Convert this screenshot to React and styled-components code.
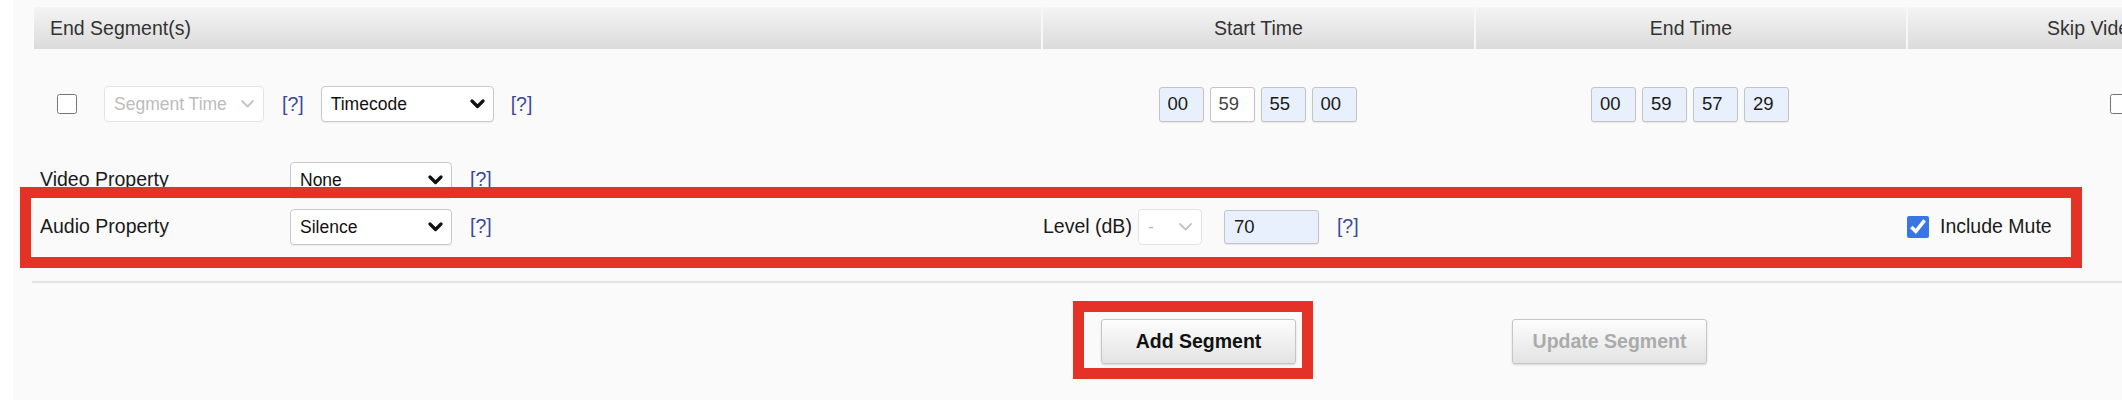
import React from "react";
import styled, { createGlobalStyle } from "styled-components";

const GlobalStyle = createGlobalStyle`
  html, body {
    margin: 0;
    padding: 0;
    background: #ffffff;
    overflow: hidden;
  }
  * {
    box-sizing: border-box;
  }
`;

const FONT = `"Liberation Sans", Arial, sans-serif`;

const Page = styled.div`
  position: relative;
  min-height: 400px;
  padding-left: 13px;
  font-family: ${FONT};
  font-size: 19.5px;
  color: #1a1a1a;
`;

const Panel = styled.div`
  min-height: 400px;
  background: #fafafa;
  padding: 7px 0 0 21px;
  width: 2400px;
`;

const Table = styled.div`
  display: grid;
  grid-template-columns: 1007px 433px 432px 373px;
`;

const HeadRow = styled.div`
  display: contents;
`;

const HeadCell = styled.div`
  height: 42px;
  display: flex;
  align-items: center;
  justify-content: ${(p) => (p.$left ? "flex-start" : "center")};
  padding-left: ${(p) => (p.$left ? "16px" : "0")};
  background: linear-gradient(#f4f4f4, #dbdbdb);
  border-left: ${(p) => (p.$left ? "none" : "2px solid #f7f7f7")};
  color: #333;
  white-space: nowrap;
`;

const Row = styled.div`
  display: contents;
`;

const Cell = styled.div`
  height: ${(p) => p.$h}px;
  padding-top: ${(p) => p.$pt || 0}px;
  padding-left: ${(p) => p.$pl || 0}px;
  display: flex;
  align-items: center;
  justify-content: ${(p) => (p.$center ? "center" : "flex-start")};
  gap: ${(p) => p.$gap || 0}px;
`;

const Check = styled.input.attrs({ type: "checkbox" })`
  width: ${(p) => p.$size || 20}px;
  height: ${(p) => p.$size || 20}px;
  margin: 0;
  accent-color: #3a76e2;
  flex: none;
`;

const SelectWrap = styled.span`
  position: relative;
  display: inline-flex;
  flex: none;
  width: ${(p) => p.$w}px;
  height: 36px;
  margin-left: ${(p) => p.$ml || 0}px;
`;

const NativeSelect = styled.select`
  appearance: none;
  width: 100%;
  height: 100%;
  margin: 0;
  padding: 0 26px 0 9px;
  border: 1px solid #c9c9c9;
  border-radius: 4px;
  background: #ffffff;
  box-shadow: 0 1px 1px rgba(0, 0, 0, 0.06);
  font-family: ${FONT};
  font-size: 17.5px;
  color: #111;
  &:disabled {
    opacity: 1;
    color: #bcbcbc;
    border-color: #e4e4e4;
    box-shadow: none;
  }
`;

const Chevron = styled.svg`
  position: absolute;
  right: 9px;
  top: 50%;
  transform: translateY(-50%);
  pointer-events: none;
`;

const Help = styled.span`
  color: #3c4a9c;
  margin-left: ${(p) => p.$ml || 0}px;
  flex: none;
`;

const TimeField = styled.input`
  width: 45px;
  height: 35px;
  margin: 0;
  padding: 0 0 0 8px;
  border: 1px solid #c4c4c4;
  border-radius: 3px;
  background: ${(p) => (p.$plain ? "#ffffff" : "#e8f0fe")};
  box-shadow: 0 1px 1px rgba(0, 0, 0, 0.08);
  font-family: ${FONT};
  font-size: 18.5px;
  color: ${(p) => (p.$plain ? "#444" : "#1a1a1a")};
  flex: none;
`;

const LevelField = styled(TimeField)`
  width: 95px;
  height: 34px;
  margin-left: 22px;
  padding-left: 9px;
`;

const PropLabel = styled.span`
  width: 250px;
  flex: none;
`;

const LevelLabel = styled.span`
  margin-right: 6px;
`;

const MuteLabel = styled.label`
  display: flex;
  align-items: center;
  gap: 11px;
  padding-left: 1px;
`;

const Divider = styled.div`
  height: 2px;
  margin: 31px 0 0 -2px;
  background: #e4e4e4;
`;

const Actions = styled.div`
  display: flex;
  gap: 216px;
  padding: 36px 0 0 1067px;
`;

const Button = styled.button`
  width: 195px;
  height: 45px;
  border: 1px solid #c6c6c6;
  border-radius: 3px;
  background: linear-gradient(#fdfdfd, #e3e3e3);
  box-shadow: 0 1px 2px rgba(0, 0, 0, 0.15);
  font-family: ${FONT};
  font-size: 19.5px;
  font-weight: bold;
  color: #111;
  &:disabled {
    color: #ababab;
  }
`;

const Highlight = styled.div`
  position: absolute;
  left: ${(p) => p.$x}px;
  top: ${(p) => p.$y}px;
  width: ${(p) => p.$w}px;
  height: ${(p) => p.$h}px;
  border: 11px solid #e53226;
  pointer-events: none;
`;

const Select = ({ w, ml, value, disabled }) => (
  <SelectWrap $w={w} $ml={ml}>
    <NativeSelect disabled={disabled} defaultValue={value}>
      <option>{value}</option>
    </NativeSelect>
    <Chevron width="15" height="10" viewBox="0 0 15 10">
      <path
        d="M2 2 L7.5 7.5 L13 2"
        fill="none"
        stroke={disabled ? "#c4c4c4" : "#111"}
        strokeWidth={disabled ? 1.8 : 3.2}
        strokeLinecap="round"
        strokeLinejoin="round"
      />
    </Chevron>
  </SelectWrap>
);

const TimeInputs = ({ values, plain = [] }) =>
  values.map((v, i) => (
    <TimeField key={i} defaultValue={v} $plain={plain.includes(i)} readOnly />
  ));

const App = () => {
  return (
    <>
      <GlobalStyle />
      <Page>
        <Panel>
          <Table>
            <HeadRow>
              <HeadCell $left>End Segment(s)</HeadCell>
              <HeadCell>Start Time</HeadCell>
              <HeadCell>End Time</HeadCell>
              <HeadCell>Skip Video</HeadCell>
            </HeadRow>

            <Row>
              <Cell $h={107} $pt={3} $pl={23}>
                <Check />
                <Select w={160} ml={27} value="Segment Time" disabled />
                <Help $ml={18}>[?]</Help>
                <Select w={173} ml={17} value="Timecode" />
                <Help $ml={17}>[?]</Help>
              </Cell>
              <Cell $h={107} $pt={3} $center $gap={6}>
                <TimeInputs values={["00", "59", "55", "00"]} plain={[1]} />
              </Cell>
              <Cell $h={107} $pt={3} $center $gap={6}>
                <TimeInputs values={["00", "59", "57", "29"]} />
              </Cell>
              <Cell $h={107} $pt={3} $pl={204}>
                <Check />
              </Cell>
            </Row>

            <Row>
              <Cell $h={47} $pl={6}>
                <PropLabel>Video Property</PropLabel>
                <Select w={162} value="None" />
                <Help $ml={18}>[?]</Help>
              </Cell>
              <Cell $h={47} />
              <Cell $h={47} />
              <Cell $h={47} />
            </Row>

            <Row>
              <Cell $h={47} $pl={6}>
                <PropLabel>Audio Property</PropLabel>
                <Select w={162} value="Silence" />
                <Help $ml={18}>[?]</Help>
              </Cell>
              <Cell $h={47} $pl={2}>
                <LevelLabel>Level (dB)</LevelLabel>
                <Select w={64} value="-" disabled />
                <LevelField defaultValue="70" readOnly />
                <Help $ml={18}>[?]</Help>
              </Cell>
              <Cell $h={47} />
              <Cell $h={47}>
                <MuteLabel>
                  <Check $size={22} defaultChecked />
                  Include Mute
                </MuteLabel>
              </Cell>
            </Row>
          </Table>

          <Divider />

          <Actions>
            <Button>Add Segment</Button>
            <Button disabled>Update Segment</Button>
          </Actions>
        </Panel>

        <Highlight $x={20} $y={187} $w={2062} $h={81} />
        <Highlight $x={1073} $y={301} $w={240} $h={78} />
      </Page>
    </>
  );
};

export default App;
